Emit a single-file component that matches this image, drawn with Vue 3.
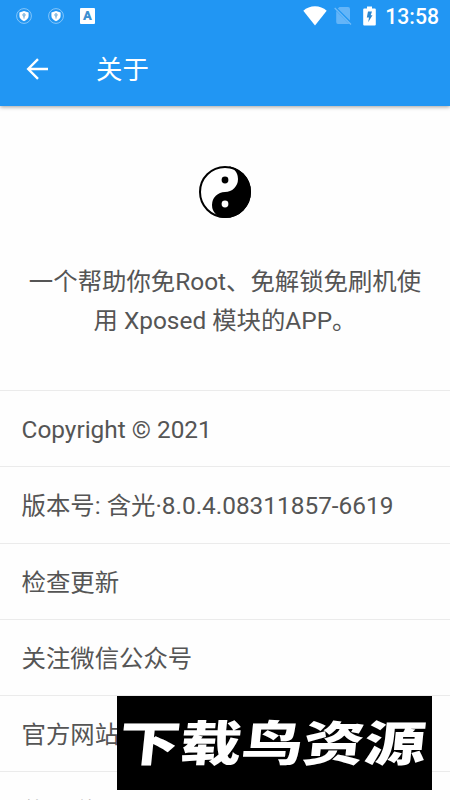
<template>
  <div class="screen">
    <header class="app-header">
      <div class="status-bar">
        <div class="notifications">
          <svg v-for="n in 2" :key="n" class="shield" viewBox="0 0 16 16">
            <circle cx="8" cy="8" r="7.4" fill="none" stroke="#8fcbfa" stroke-width="0.9" />
            <path d="M8 3.1 12.6 4.6V8c0 2.3-2 4.2-4.6 5.2-2.6-1-4.6-2.9-4.6-5.2V4.6Z" fill="#fff" />
            <circle cx="8" cy="6.9" r="1.3" fill="#a9cfea" stroke="#5aa2d8" stroke-width="0.6" />
            <path d="M8 8v2.6" stroke="#5aa2d8" stroke-width="0.9" />
          </svg>
          <span class="letter-badge">A</span>
        </div>
        <div class="system">
          <svg class="wifi" viewBox="0 0 24 20">
            <path d="M.3 4.8C3.5 1.8 7.5.3 12 .3s8.5 1.5 11.7 4.5L12 19.4Z" fill="#fff" />
          </svg>
          <svg class="no-sim" viewBox="0 0 18 20">
            <path d="M5.5 1H14q2 0 2 2v11.5L3.8 2.5ZM2.2 5 15.5 18H4q-1.800 0-1.800-2Z" fill="#64b5f8" />
            <path d="M.7 2 17 18.500" stroke="#72bcf8" stroke-width="1.2" />
          </svg>
          <svg class="battery" viewBox="0 0 13 20">
            <path d="M4 .4h5v2h2.800q1 0 1 1v15.200q0 1-1 1H1.200q-1 0-1-1V3.400q0-1 1-1H4Z" fill="#fff" />
            <path d="M5 5.500h4L7.700 9.300h1.800L5.200 16.300l.8-4.800H3.800Z" fill="#2b86cf" />
          </svg>
          <span class="clock">13:58</span>
        </div>
      </div>
      <div class="toolbar">
        <svg class="back" viewBox="0 0 22 22">
          <path d="M22 11H2.500M12 1.200 2.200 11l9.800 9.800" fill="none" stroke="#fff" stroke-width="2.400" />
        </svg>
        <h1 class="title">关于</h1>
      </div>
    </header>

    <section class="intro">
      <svg class="taiji" viewBox="0 0 54 54">
        <circle cx="27" cy="27" r="25" fill="#fff" stroke="#000" stroke-width="2" />
        <path d="M27 1a26 26 0 0 1 0 52 13 13 0 0 1 0-26 13 13 0 0 0 0-26Z" fill="#000" />
        <circle cx="27" cy="15" r="3.400" fill="#000" />
        <circle cx="27" cy="39" r="3.400" fill="#fff" />
      </svg>
      <p class="description">一个帮助你免Root、免解锁免刷机使<br />用 Xposed 模块的APP。</p>
    </section>

    <ul class="list">
      <li v-for="item in items" :key="item" class="list-item">{{ item }}</li>
    </ul>

    <div class="watermark">
      <svg viewBox="0 0 315 94">
        <text x="3" y="65" textLength="307" lengthAdjust="spacingAndGlyphs" transform="translate(4 0) skewX(-6)">下载鸟资源</text>
      </svg>
    </div>
  </div>
</template>

<script setup>
const items = [
  "Copyright © 2021",
  "版本号: 含光·8.0.4.08311857-6619",
  "检查更新",
  "关注微信公众号",
  "官方网站",
  "使用说明",
];
</script>

<style>
body {
  overflow: hidden;
}
</style>

<style scoped>
.screen {
  position: relative;
  width: 450px;
  height: 800px;
  overflow: hidden;
  background: #fefefe;
  color: #555;
  font-family: Roboto, "Noto Sans CJK SC", sans-serif;
}
.app-header {
  height: 106px;
  background: #2196f3;
  box-shadow: 0 1px 4px rgba(0, 0, 0, 0.38);
}
.status-bar {
  display: flex;
  justify-content: space-between;
  height: 32px;
  padding: 0 11px 0 16px;
}
.notifications,
.system {
  display: flex;
  align-items: center;
}
.notifications {
  gap: 16px;
}
.shield {
  width: 16px;
  height: 16px;
}
.letter-badge {
  width: 15px;
  height: 16px;
  border-radius: 1px;
  background: #fff;
  color: #3d8fd0;
  font-size: 13px;
  font-weight: 900;
  line-height: 15px;
  text-align: center;
}
.wifi {
  width: 24px;
  height: 20px;
  margin-right: 7px;
}
.no-sim {
  width: 18px;
  height: 20px;
  margin-right: 11px;
}
.battery {
  width: 13px;
  height: 20px;
  margin-right: 9px;
}
.clock {
  padding-top: 1px;
  color: #fff;
  font-size: 21.2px;
  font-weight: 500;
  line-height: 32px;
}
.toolbar {
  display: flex;
  align-items: center;
  height: 74px;
  padding-left: 26px;
}
.back {
  width: 22px;
  height: 22px;
}
.title {
  margin: 2px 0 0 48px;
  color: #fff;
  font-size: 26.4px;
  font-weight: 400;
  line-height: 40px;
}
.intro {
  display: flex;
  flex-direction: column;
  align-items: center;
  box-sizing: border-box;
  height: 284px;
  padding-top: 59px;
}
.taiji {
  width: 54px;
  height: 54px;
}
.description {
  margin: 43px 0 0;
  font-size: 24.4px;
  line-height: 39px;
  text-align: center;
  white-space: nowrap;
}
.list {
  margin: 0;
  padding: 0;
  list-style: none;
}
.list-item {
  box-sizing: border-box;
  height: 76.25px;
  padding: 1px 21.5px 0;
  border-top: 1px solid #ebebeb;
  font-size: 24.4px;
  line-height: 76px;
  white-space: nowrap;
}
/* only the very top of the last row is visible */
.list-item:last-child {
  padding-top: 2px;
}
.watermark {
  position: absolute;
  left: 117px;
  top: 696px;
  width: 315px;
  height: 94px;
  background: #000;
}
.watermark svg {
  display: block;
  width: 315px;
  height: 94px;
}
.watermark text {
  fill: #fff;
  font-family: "Noto Sans CJK SC", sans-serif;
  font-size: 48px;
  font-weight: 900;
}
</style>
